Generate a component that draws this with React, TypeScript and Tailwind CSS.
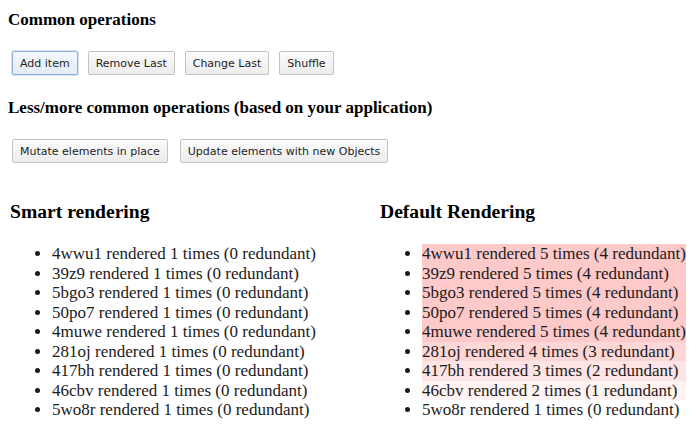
const commonOps = ["Add item", "Remove Last", "Change Last", "Shuffle"];
const extraOps = ["Mutate elements in place", "Update elements with new Objects"];

type Item = { id: string; renders: number };

const smart: Item[] = [
  { id: "4wwu1", renders: 1 },
  { id: "39z9", renders: 1 },
  { id: "5bgo3", renders: 1 },
  { id: "50po7", renders: 1 },
  { id: "4muwe", renders: 1 },
  { id: "281oj", renders: 1 },
  { id: "417bh", renders: 1 },
  { id: "46cbv", renders: 1 },
  { id: "5wo8r", renders: 1 },
];

const naive: Item[] = [
  { id: "4wwu1", renders: 5 },
  { id: "39z9", renders: 5 },
  { id: "5bgo3", renders: 5 },
  { id: "50po7", renders: 5 },
  { id: "4muwe", renders: 5 },
  { id: "281oj", renders: 4 },
  { id: "417bh", renders: 3 },
  { id: "46cbv", renders: 2 },
  { id: "5wo8r", renders: 1 },
];

function Button({ label, focused }: { label: string; focused?: boolean }) {
  return (
    <button
      className={
        "h-[24px] px-[7px] rounded-[2px] border text-[11px] text-[#1e1e1e] font-['DejaVu_Sans',sans-serif] leading-none " +
        (focused
          ? "border-[#8fb0d8] bg-gradient-to-b from-[#f4f8fc] to-[#e3ebf4] shadow-[0_0_0_1px_#d4e2f1]"
          : "border-[#c2c2c2] bg-gradient-to-b from-[#fbfbfb] to-[#ececec]")
      }
    >
      {label}
    </button>
  );
}

function RenderList({ title, items }: { title: string; items: Item[] }) {
  return (
    <div>
      <h2 className="text-[19.6px] leading-[22px] font-bold font-['Liberation_Serif',serif]">{title}</h2>
      <ul className="mt-[21px] pl-[42px] list-disc list-outside text-[17px] leading-[19.5px] text-[#1b1b1b]">
        {items.map((it) => {
          const redundant = it.renders - 1;
          return (
            <li
              key={it.id}
              style={redundant > 0 ? { backgroundColor: `rgba(245, 30, 30, ${Math.min(redundant, 4) * 0.06})` } : undefined}
            >
              {it.id} rendered {it.renders} times ({redundant} redundant)
            </li>
          );
        })}
      </ul>
    </div>
  );
}

export default function App() {
  return (
    <div className="w-[700px] h-[433px] bg-white px-[8px] pt-[10px] font-['Liberation_Serif',serif] text-black overflow-hidden">
      <h1 className="text-[17px] leading-[19px] font-bold font-['Liberation_Serif',serif]">Common operations</h1>
      <div className="mt-[22px] ml-[4px] flex gap-[10px]">
        {commonOps.map((op, i) => (
          <Button key={op} label={op} focused={i === 0} />
        ))}
      </div>

      <h1 className="mt-[23px] text-[17px] leading-[19px] font-bold font-['Liberation_Serif',serif]">
        Less/more common operations (based on your application)
      </h1>
      <div className="mt-[22px] ml-[4px] flex gap-[12px]">
        {extraOps.map((op) => (
          <Button key={op} label={op} />
        ))}
      </div>

      <div className="mt-[38px] grid grid-cols-[370px_306px] pl-[2px]">
        <RenderList title="Smart rendering" items={smart} />
        <RenderList title="Default Rendering" items={naive} />
      </div>
    </div>
  );
}
